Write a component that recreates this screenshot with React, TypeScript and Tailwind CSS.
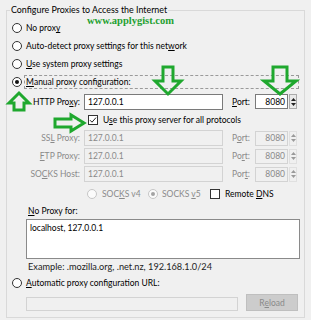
import type { ReactNode } from "react";

const font = "font-['Lato',sans-serif] text-[8.5px] leading-[12px]";

const Radio = ({ checked, disabled }: { checked?: boolean; disabled?: boolean }) => (
  <span
    className={`flex h-[10px] w-[10px] shrink-0 items-center justify-center rounded-full border ${
      disabled ? "border-[#c6c6c6] bg-[#fbfbfb]" : "border-[#333333] bg-white"
    }`}
  >
    {checked && (
      <span className={`h-[4px] w-[4px] rounded-full ${disabled ? "bg-[#a3a3a3]" : "bg-[#111111]"}`} />
    )}
  </span>
);

const Checkbox = ({ checked, disabled }: { checked?: boolean; disabled?: boolean }) => (
  <span
    className={`flex h-[10px] w-[10px] shrink-0 items-center justify-center border ${
      disabled ? "border-[#c6c6c6] bg-[#fbfbfb]" : "border-[#333333] bg-white"
    }`}
  >
    {checked && (
      <svg width="8" height="8" viewBox="0 0 8 8">
        <path d="M1 4.2 L3 6.2 L7 1.6" fill="none" stroke="#222" strokeWidth="1" />
      </svg>
    )}
  </span>
);

const Spin = ({ disabled }: { disabled?: boolean }) => (
  <span
    className={`ml-[1px] flex h-[15px] w-[8px] flex-col items-center justify-center gap-[2px] border ${
      disabled ? "border-[#e0e0e0] bg-[#f0f0f0]" : "border-[#aaaaaa] bg-[#e9e9e9]"
    }`}
  >
    <svg width="5" height="3" viewBox="0 0 5 3">
      <path d="M0 3 L2.5 0 L5 3 Z" fill={disabled ? "#9a9a9a" : "#222"} />
    </svg>
    <svg width="5" height="3" viewBox="0 0 5 3">
      <path d="M0 0 L2.5 3 L5 0 Z" fill={disabled ? "#9a9a9a" : "#222"} />
    </svg>
  </span>
);

const ProxyRow = ({
  label,
  port,
  disabled,
  height,
}: {
  label: ReactNode;
  port: ReactNode;
  disabled?: boolean;
  height: string;
}) => (
  <div className={`flex items-center ${height}`}>
    <span className={`w-[73px] text-right ${disabled ? "text-[#8a8a8a]" : "text-black"}`}>{label}</span>
    <span
      className={`ml-[4px] flex h-[16px] w-[139px] items-center border px-[3px] ${
        disabled ? "border-[#d3d3d3] bg-[#f0f0f0] text-[#8a8a8a]" : "border-[#7a7a7a] bg-white text-black"
      }`}
    >
      127.0.0.1
    </span>
    <span className={`ml-[9px] w-[23px] ${disabled ? "text-[#8a8a8a]" : "text-black"}`}>{port}</span>
    <span
      className={`flex h-[15px] w-[33px] items-center justify-end border pr-[2px] ${
        disabled ? "border-[#d3d3d3] bg-[#f0f0f0] text-[#8a8a8a]" : "border-[#7a7a7a] bg-white text-black"
      }`}
    >
      8080
    </span>
    <Spin disabled={disabled} />
  </div>
);

export default function App() {
  return (
    <div className={`relative h-[320px] w-[311px] overflow-hidden bg-[#f0f0f0] ${font}`}>
      <fieldset className="ml-[6px] mt-[4px] h-[314px] w-[299px] border border-[#d9d9d9]">
        <legend className="ml-[3px] px-[1px] text-[8.9px] text-black">Configure Proxies to Access the Internet</legend>
        <div className="flex flex-col pl-[5px] pt-[3px]">
          <div className="flex h-[18px] items-center gap-[4px]">
            <Radio />
            <span>
              No prox<u>y</u>
            </span>
          </div>
          <div className="flex h-[18px] items-center gap-[4px]">
            <Radio />
            <span>
              Auto-detect proxy settings for this net<u>w</u>ork
            </span>
          </div>
          <div className="flex h-[18px] items-center gap-[4px]">
            <Radio />
            <span>
              <u>U</u>se system proxy settings
            </span>
          </div>
          <div className="flex h-[18px] items-center">
            <Radio checked />
            <span className="ml-[2px] mr-[5px] flex h-[14px] flex-1 items-center border border-dashed border-[#9a9a9a] pl-[1px]">
              <u>M</u>anual proxy configuration:
            </span>
          </div>

          <div className="-ml-[5px] flex flex-col pt-[2px]">
            <ProxyRow
              height="h-[17px]"
              label={
                <>
                  HTTP Pro<u>x</u>y:
                </>
              }
              port={
                <>
                  <u>P</u>ort:
                </>
              }
            />
            <div className="flex h-[19px] items-center pl-[81px]">
              <Checkbox checked />
              <span className="ml-[5px]">
                U<u>s</u>e this proxy server for all protocols
              </span>
            </div>
            <ProxyRow
              disabled
              height="h-[18px]"
              label={
                <>
                  SS<u>L</u> Proxy:
                </>
              }
              port={
                <>
                  P<u>o</u>rt:
                </>
              }
            />
            <ProxyRow
              disabled
              height="h-[18px]"
              label={
                <>
                  <u>F</u>TP Proxy:
                </>
              }
              port={
                <>
                  Po<u>r</u>t:
                </>
              }
            />
            <ProxyRow
              disabled
              height="h-[18px]"
              label={
                <>
                  SO<u>C</u>KS Host:
                </>
              }
              port={
                <>
                  Por<u>t</u>:
                </>
              }
            />
            <div className="mt-[2px] flex h-[18px] items-center pl-[80px]">
              <Radio disabled />
              <span className="ml-[5px] w-[46px] text-[#8a8a8a]">
                SOC<u>K</u>S v4
              </span>
              <Radio checked disabled />
              <span className="ml-[4px] w-[48px] text-[#8a8a8a]">
                SOCKS <u>v</u>5
              </span>
              <Checkbox />
              <span className="ml-[5px]">
                Remote <u>D</u>NS
              </span>
            </div>
            <div className="flex h-[16px] items-center pl-[21px]">
              <u>N</u>o Proxy for:
            </div>
            <div className="ml-[19px] h-[40px] w-[274px] border border-[#8a8a8a] bg-white px-[3px] pt-[2px]">
              localhost, 127.0.0.1
            </div>
            <div className="flex h-[16px] items-center pl-[21px] text-[9.2px] text-[#222222]">
              Example: .mozilla.org, .net.nz, 192.168.1.0/24
            </div>
          </div>
          <div className="flex h-[16px] items-center gap-[4px]">
            <Radio />
            <span>
              <u>A</u>utomatic proxy configuration URL:
            </span>
          </div>
          <div className="flex items-start pl-[14px]">
            <span className="mt-[6px] h-[14px] w-[212px] border border-[#d3d3d3] bg-[#f0f0f0]" />
            <span className="ml-[8px] mt-[3px] flex h-[17px] w-[52px] items-center justify-center border border-[#bfbfbf] bg-[#cccccc] text-[#8a8a8a]">
              R<u>e</u>load
            </span>
          </div>
        </div>
      </fieldset>

      {/* annotations */}
      <span className="absolute left-[87px] top-[15px] font-['Liberation_Serif',serif] text-[10.5px] font-bold leading-[12px] text-[#1fa030]">
        www.applygist.com
      </span>
      <svg className="absolute left-0 top-0" width="311" height="320" viewBox="0 0 311 320">
        <g fill="none" stroke="#1fa82e" strokeWidth="3" strokeLinejoin="miter">
          {/* down arrow over http input */}
          <path d="M163 67 H173 V81 H181 L168 94 L155 81 H163 Z" />
          {/* down arrow over port */}
          <path d="M273 67 H287 V81 H296 L280 94 L264 81 H273 Z" />
          {/* up arrow below manual radio */}
          <path d="M14 110 H24 V103 H29 L19 93 L9 103 H14 Z" />
          {/* right arrow to checkbox */}
          <path d="M55 119 H71 V115 L84 123 L71 131 V127 H55 Z" />
        </g>
      </svg>
    </div>
  );
}
